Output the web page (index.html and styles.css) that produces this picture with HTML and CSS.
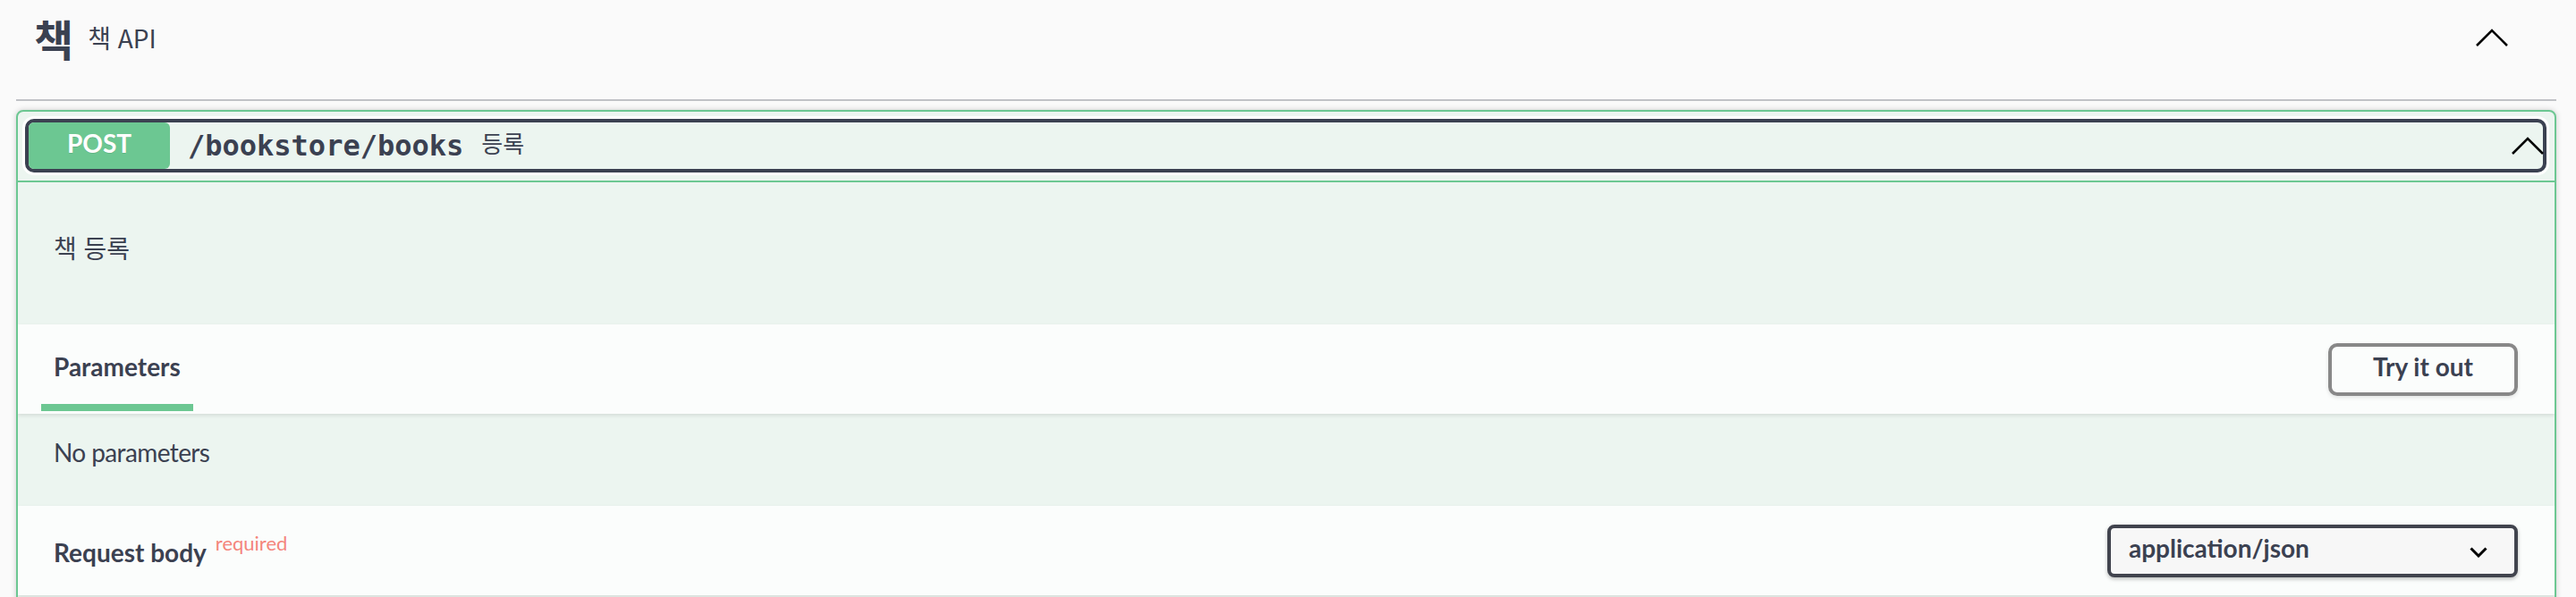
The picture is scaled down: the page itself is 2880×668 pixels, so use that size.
FILE: index.html
```html
<!DOCTYPE html>
<html lang="ko">
<head>
<meta charset="utf-8">
<title>Swagger UI</title>
<link rel="stylesheet" href="styles.css">
</head>
<body>
<div class="wrapper">
  <section class="tag-section">
    <h3 class="opblock-tag">
      <span class="tag-name">책</span>
      <small class="tag-desc">책 API</small>
      <span class="spacer"></span>
      <svg class="tag-arrow" width="36" height="20" viewBox="0 0 36 20" aria-hidden="true"><polyline points="1,19 18,2 35,19" fill="none" stroke="#000" stroke-width="2.6"/></svg>
    </h3>
    <div class="opblock">
      <div class="opblock-summary">
        <div class="summary-control">
          <span class="method"><span class="method-text">POST</span></span>
          <span class="path">/bookstore/books</span>
          <span class="summary-desc">등록</span>
          <span class="spacer"></span>
          <svg class="summary-arrow" width="36" height="20" viewBox="0 0 36 20" aria-hidden="true"><polyline points="1,19 18,2 35,19" fill="none" stroke="#000" stroke-width="2.6"/></svg>
        </div>
      </div>
      <div class="opblock-body">
        <div class="description"><p>책 등록</p></div>
        <div class="section-header">
          <div class="tab-item"><h4 class="section-title">Parameters</h4></div>
          <button class="try-out" type="button"><span class="btn-text">Try it out</span></button>
        </div>
        <div class="no-params"><p>No parameters</p></div>
        <div class="section-header">
          <h4 class="section-title">Request body<span class="required">required</span></h4>
          <div class="select">
            <span class="select-text">application/json</span>
            <svg class="select-arrow" width="20" height="12" viewBox="0 0 20 12" aria-hidden="true"><polyline points="1.5,1.5 10,10 18.5,1.5" fill="none" stroke="#000" stroke-width="3"/></svg>
          </div>
        </div>
        <div class="request-body-content"></div>
      </div>
    </div>
  </section>
</div>
</body>
</html>
```

FILE: styles.css
```css
* { box-sizing: border-box; }

html, body {
  margin: 0;
  padding: 0;
}

body {
  background: #fafafa;
  font-family: Lato, "Noto Sans CJK KR", sans-serif;
  color: #3b4151;
}

.wrapper {
  padding: 0 22px 0 18px;
}

.spacer { flex: 1; }

/* Tag heading */
.opblock-tag {
  display: flex;
  align-items: center;
  margin: 0 0 10px;
  padding: 18px 0 45px 20px;
  border-bottom: 2px solid rgba(59, 65, 81, 0.3);
  font-family: "Noto Sans CJK KR", sans-serif;
  font-size: 48px;
  line-height: 48px;
  font-weight: 700;
  color: #3b4151;
}

.tag-desc {
  font-family: "Noto Sans CJK KR", sans-serif;
  font-size: 28px;
  line-height: 40px;
  font-weight: 400;
  margin-left: 16px;
}

.tag-arrow {
  display: block;
  margin-right: 54px;
}

/* Operation block */
.opblock {
  border: 2px solid #6cc792;
  border-radius: 8px;
  background: #ecf5f0;
  box-shadow: 0 0 6px rgba(0, 0, 0, 0.19);
  overflow: hidden;
}

.opblock-summary {
  padding: 8px 9px 9px 8px;
  border-bottom: 2px solid #6cc792;
}

.summary-control {
  display: flex;
  align-items: center;
  height: 60px;
  border: 4px solid #3b4151;
  border-radius: 10px;
  box-shadow: 0 0 0 3px #fff;
}

.method {
  width: 158px;
  height: 52px;
  display: flex;
  align-items: center;
  justify-content: center;
  background: #6cc792;
  color: #fff;
  border-radius: 6px;
  font-size: 28px;
  line-height: 40px;
  font-weight: 700;
  text-shadow: 0 1px 0 rgba(0, 0, 0, 0.1);
}

.method-text { padding-bottom: 6px; }

.path {
  padding: 0 20px;
  font-family: "DejaVu Sans Mono", "Liberation Mono", monospace;
  font-size: 32px;
  line-height: 40px;
  font-weight: 700;
  color: #3b4151;
}

.summary-desc {
  font-family: "Noto Sans CJK KR", sans-serif;
  font-size: 26px;
  line-height: 40px;
  padding-bottom: 6px;
  color: #3b4151;
}

.summary-arrow {
  display: block;
  margin-right: -1px;
}

/* Body */
.description {
  padding: 53px 40px 66px;
}

.description p {
  margin: 0;
  font-family: "Noto Sans CJK KR", sans-serif;
  font-size: 28px;
  line-height: 40px;
}

.no-params p {
  margin: 0;
  font-size: 28px;
  line-height: 40px;
  letter-spacing: -0.6px;
}

.section-header {
  display: flex;
  align-items: center;
  justify-content: space-between;
  height: 100px;
  padding: 0 41px 0 40px;
  background: rgba(255, 255, 255, 0.8);
  box-shadow: 0 2px 4px rgba(0, 0, 0, 0.1);
}

.tab-item {
  align-self: stretch;
  display: flex;
  align-items: center;
  position: relative;
}

.tab-item::after {
  content: "";
  position: absolute;
  left: -14px;
  right: -14px;
  bottom: 3px;
  height: 8px;
  background: #6cc792;
}

.section-title {
  margin: 0;
  padding-bottom: 6px;
  font-size: 28px;
  line-height: 40px;
  font-weight: 700;
  color: #3b4151;
}

.required {
  margin-left: 10px;
  font-size: 22px;
  font-weight: 400;
  color: #f4857b;
  vertical-align: 13px;
}

.try-out {
  height: 59px;
  padding: 0 46px;
  border: 4px solid #888;
  border-radius: 10px;
  background: transparent;
  box-shadow: 0 2px 4px rgba(0, 0, 0, 0.1);
  font-family: inherit;
  font-size: 28px;
  line-height: 40px;
  font-weight: 700;
  color: #3b4151;
}

.btn-text {
  display: inline-block;
  padding-bottom: 6px;
}

.no-params {
  padding: 23px 40px 40px;
}

.select {
  width: 459px;
  height: 59px;
  display: flex;
  align-items: center;
  justify-content: space-between;
  padding: 0 30px 0 20px;
  border: 4px solid #41444e;
  border-radius: 8px;
  background: #f7f7f7;
  box-shadow: 0 2px 4px rgba(0, 0, 0, 0.25);
  font-size: 28px;
  line-height: 40px;
  font-weight: 700;
  color: #3b4151;
}

.select-text { padding-bottom: 6px; }

.select-arrow {
  display: block;
  margin-top: 3px;
}

.request-body-content {
  height: 80px;
}
```
